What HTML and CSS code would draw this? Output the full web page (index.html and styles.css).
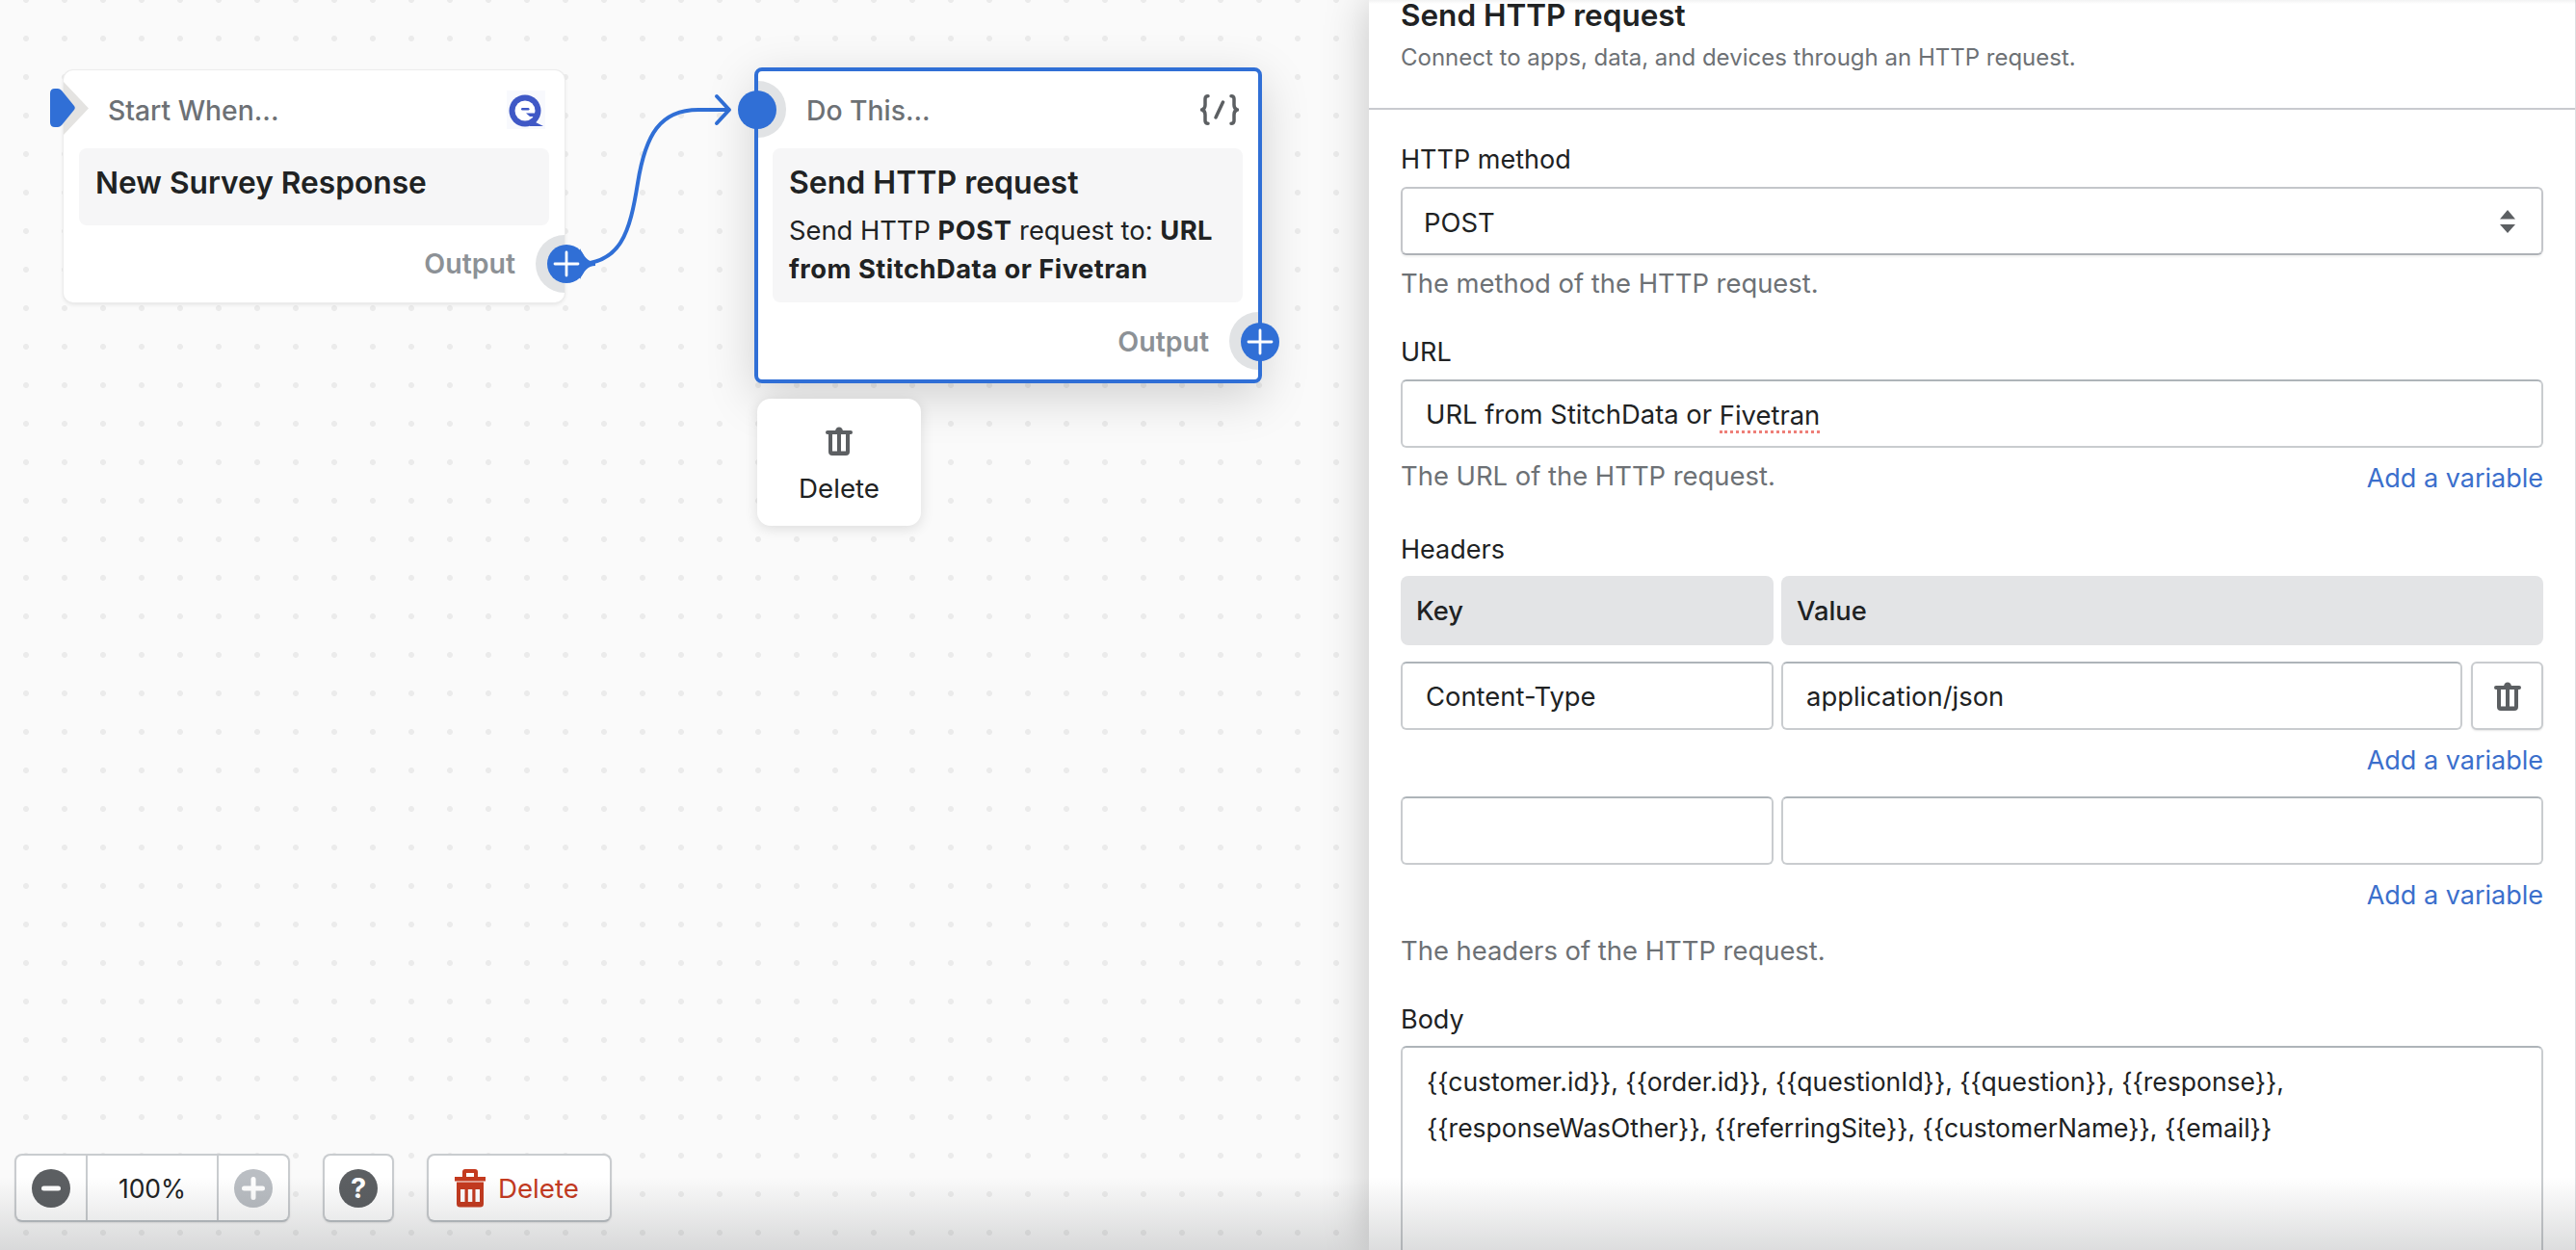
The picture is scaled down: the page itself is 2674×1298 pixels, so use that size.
FILE: index.html
```html
<!DOCTYPE html>
<html lang="en">
<head>
<meta charset="utf-8">
<title>Send HTTP request</title>
<link rel="stylesheet" href="styles.css">
</head>
<body>
<div class="app">
  <main class="canvas">
    <svg class="wires" width="1421" height="1298" viewBox="0 0 1421 1298" fill="none">
      <path d="M596 274C645 276 654 240 662 190C670 140 685 114 725 114L756 114" stroke="#306fd6" stroke-width="4"/>
      <path d="M744 100L757 114L744 128" stroke="#306fd6" stroke-width="4" stroke-linecap="round" stroke-linejoin="round"/>
      <path d="M602 258C606 266 610 272 618 272L618 276C610 276 606 282 602 290Z" fill="#306fd6"/>
    </svg>

    <section class="node node-start">
      <span class="notch"></span>
      <svg class="start-port" width="26" height="40" viewBox="0 0 26 40"><path d="M5 0H8Q10 0 12 2L25 18Q26.500 20 25 22L12 38Q10 40 8 40H5Q0 40 0 35V5Q0 0 5 0Z" fill="#306fd6"/></svg>
      <header class="node-head">
        <span class="node-kicker">Start When...</span>
        <svg class="logo" width="40" height="40" viewBox="0 0 40 40">
          <rect width="40" height="40" fill="#f8f9fd"/>
          <circle cx="19" cy="21" r="16.500" fill="#3f58c6"/>
          <path d="M24 30L38 37H24Z" fill="#3f58c6"/>
          <circle cx="19" cy="21" r="10.500" fill="#fff"/>
          <rect x="15" y="18" width="8.500" height="2.500" rx="1.200" fill="#3f58c6"/>
          <path d="M20 23.500H31V27H24Z" fill="#3f58c6"/>
        </svg>
      </header>
      <div class="node-block node-block-short">
        <h2 class="node-title">New Survey Response</h2>
      </div>
      <footer class="node-foot">Output</footer>
      <span class="halo"></span>
      <span class="plus-port">
        <svg width="40" height="40" viewBox="0 0 40 40"><circle cx="20" cy="20" r="20" fill="#306fd6"/><path d="M20 8V32M8 20H32" stroke="#fff" stroke-width="2.800" stroke-linecap="round"/></svg>
      </span>
    </section>

    <section class="node node-action">
      <span class="halo-in"></span>
      <span class="in-port"></span>
      <header class="node-head">
        <span class="node-kicker">Do This...</span>
        <svg class="code-icon" width="40" height="32" viewBox="0 0 40 32" fill="none" stroke="#5c5f62" stroke-width="3.500" stroke-linecap="round">
          <path d="M8 1.800Q5 1.800 5 4.800V11Q5 15 1.800 16Q5 17 5 21V27.200Q5 30.200 8 30.200"/>
          <path d="M32 1.800Q35 1.800 35 4.800V11Q35 15 38.200 16Q35 17 35 21V27.200Q35 30.200 32 30.200"/>
          <path d="M23.500 8L16 24"/>
        </svg>
      </header>
      <div class="node-block">
        <h2 class="node-title">Send HTTP request</h2>
        <p class="node-desc">Send HTTP <b>POST</b> request to: <b>URL from StitchData or Fivetran</b></p>
      </div>
      <footer class="node-foot">Output</footer>
      <span class="halo"></span>
      <span class="plus-port">
        <svg width="40" height="40" viewBox="0 0 40 40"><circle cx="20" cy="20" r="20" fill="#306fd6"/><path d="M20 8V32M8 20H32" stroke="#fff" stroke-width="2.800" stroke-linecap="round"/></svg>
      </span>
    </section>

    <div class="node-menu">
      <svg width="28" height="30" viewBox="0 0 28 30" fill="#5c5f62"><rect y="4" width="28" height="4" rx="2"/><path d="M10 5a4 4.500 0 0 1 8 0z"/><path d="M3 8H7V25.500H12V8H16V25.500H21V8H25V26A4 4 0 0 1 21 30H7A4 4 0 0 1 3 26Z"/></svg>
      <span>Delete</span>
    </div>

    <div class="toolbar">
      <div class="zoom-group">
        <span class="zoom-btn">
          <svg width="40" height="40" viewBox="0 0 40 40"><circle cx="20" cy="20" r="20" fill="#5c5f62"/><rect x="10" y="17.500" width="20" height="5" rx="2.500" fill="#fff"/></svg>
        </span>
        <span class="zoom-value">100%</span>
        <span class="zoom-btn">
          <svg width="40" height="40" viewBox="0 0 40 40"><circle cx="20" cy="20" r="20" fill="#babec3"/><path d="M20 10.500V29.500M10.500 20H29.500" stroke="#fff" stroke-width="5" stroke-linecap="round"/></svg>
        </span>
      </div>
      <div class="tool-btn tool-help"><span class="help-dot">?</span></div>
      <div class="tool-btn tool-delete">
        <svg width="32" height="40" viewBox="0 0 32 40" fill="#c43a1f"><path fill-rule="evenodd" d="M11 0H21A3 3 0 0 1 24 3V8H32V12.500H0V8H8V3A3 3 0 0 1 11 0ZM12 4V8H20V4Z"/><path fill-rule="evenodd" d="M2 13.500H30V36A3.500 3.500 0 0 1 26.500 39.500H5.500A3.500 3.500 0 0 1 2 36ZM6 21V34H10.500V21ZM13.800 21V34H18.300V21ZM21.500 21V34H26V21Z"/></svg>
        <span>Delete</span>
      </div>
    </div>
  </main>

  <aside class="panel">
    <header class="panel-head">
      <h1 class="panel-title">Send HTTP request</h1>
      <p class="panel-sub">Connect to apps, data, and devices through an HTTP request.</p>
    </header>
    <div class="panel-body">
      <div class="field">
        <div class="label">HTTP method</div>
        <div class="control select">
          <span class="select-value">POST</span>
          <svg width="16" height="24" viewBox="0 0 16 24" fill="#5c5f62"><path d="M8 0L16 9.500H0Z"/><path d="M0 15H16L8 24Z"/></svg>
        </div>
        <div class="help">The method of the HTTP request.</div>
      </div>

      <div class="field">
        <div class="label">URL</div>
        <div class="control">URL from StitchData or <span class="misspelt">Fivetran</span></div>
        <div class="help-row">
          <span class="help">The URL of the HTTP request.</span>
          <a class="link">Add a variable</a>
        </div>
      </div>

      <div class="field field-headers">
        <div class="label label-tight">Headers</div>
        <div class="kv-head">
          <div class="kv-cell">Key</div>
          <div class="kv-cell">Value</div>
        </div>
        <div class="kv-row">
          <div class="control">Content-Type</div>
          <div class="control">application/json</div>
          <div class="control icon-btn">
            <svg width="28" height="30" viewBox="0 0 28 30" fill="#5c5f62"><rect y="4" width="28" height="4" rx="2"/><path d="M10 5a4 4.500 0 0 1 8 0z"/><path d="M3 8H7V25.500H12V8H16V25.500H21V8H25V26A4 4 0 0 1 21 30H7A4 4 0 0 1 3 26Z"/></svg>
          </div>
        </div>
        <div class="var-row"><a class="link">Add a variable</a></div>
        <div class="kv-row kv-row-open">
          <div class="control"></div>
          <div class="control"></div>
        </div>
        <div class="var-row"><a class="link">Add a variable</a></div>
        <div class="help help-table">The headers of the HTTP request.</div>
      </div>

      <div class="field">
        <div class="label label-tight">Body</div>
        <div class="control textarea">{{customer.id}}, {{order.id}}, {{questionId}}, {{question}}, {{response}},<br>{{responseWasOther}}, {{referringSite}}, {{customerName}}, {{email}}</div>
      </div>
    </div>
  </aside>
</div>
</body>
</html>
```

FILE: styles.css
```css
* { box-sizing: border-box; }
html, body { margin: 0; height: 100%; }
body {
  font-family: Inter, "Liberation Sans", sans-serif;
  color: #202223;
  background: #fafafa;
}
.app {
  position: relative;
  display: flex;
  width: 2674px;
  height: 1298px;
  overflow: hidden;
}
.app::after {
  content: "";
  position: absolute;
  left: 0;
  right: 0;
  bottom: 0;
  height: 76px;
  background: linear-gradient(rgba(40,44,48,0), rgba(40,44,48,.16));
  pointer-events: none;
  z-index: 20;
}
.app::before {
  content: "";
  position: absolute;
  left: 1421px;
  right: 0;
  top: 0;
  height: 4px;
  background: linear-gradient(rgba(40,44,48,.06), rgba(40,44,48,0));
  z-index: 20;
}

/* canvas */
.canvas {
  position: relative;
  width: 1421px;
  flex: none;
  background-color: #fafafa;
  background-image: radial-gradient(circle at 27px 20px, #ebebeb 2.6px, rgba(235,235,235,0) 3.4px);
  background-size: 40px 40px;
  background-position: 0 20px;
}
.wires { position: absolute; left: 0; top: 0; pointer-events: none; }

.node {
  position: absolute;
  background: #fff;
  display: flex;
  flex-direction: column;
}
.node-start {
  left: 66px;
  top: 73px;
  width: 520px;
  height: 241px;
  border-radius: 10px;
  box-shadow: 0 0 0 1px #ececec, 0 2px 4px rgba(0,0,0,.1);
  z-index: 1;
}
.node-action {
  left: 783px;
  top: 70px;
  width: 527px;
  height: 328px;
  border: 4px solid #306fd6;
  border-radius: 8px;
  box-shadow: 0 14px 50px rgba(0,0,0,.17);
  z-index: 2;
}
.node-head {
  display: flex;
  align-items: center;
  justify-content: space-between;
  height: 81px;
  padding: 0 20px 0 46px;
}
.node-action .node-head { height: 80px; padding-left: 50px; }
.node-kicker { font-size: 28.300px; font-weight: 500; color: #6d7175; line-height: 40px; padding-top: 2px; }
.node-block {
  margin: 0 16px 0 15px;
  height: 160px;
  padding: 18px 17px 0;
  background: #f6f6f7;
  border-radius: 8px;
}
.node-block-short { margin: 0 16px; height: 80px; padding-top: 18px; }
.node-title { margin: 0; font-size: 32px; font-weight: 600; line-height: 36px; color: #202223; }
.node-block-short .node-title { font-size: 31.700px; }
.node-desc { margin: 12px 0 0; font-size: 27.300px; line-height: 40px; color: #202223; }
.node-desc b { font-weight: 700; letter-spacing: .5px; }
.node-foot {
  margin-top: auto;
  height: 80px;
  line-height: 80px;
  padding-right: 51px;
  text-align: right;
  font-size: 28.500px;
  font-weight: 600;
  color: #8c9196;
}
.node-action .node-foot { line-height: 82px; }

.notch {
  position: absolute;
  left: 0;
  top: 12px;
  width: 26px;
  height: 55px;
  background: #e4e3e1;
  clip-path: polygon(0 0, 100% 50%, 0 100%);
}
.start-port { position: absolute; left: -14px; top: 19px; }
.halo {
  position: absolute;
  right: 0;
  bottom: 10px;
  width: 30px;
  height: 60px;
  border-radius: 30px 0 0 30px;
  background: #e1e3e5;
}
.plus-port { position: absolute; right: -22px; bottom: 20px; width: 40px; height: 40px; z-index: 2; }
.node-action .plus-port { bottom: 19px; }
.halo-in {
  position: absolute;
  left: 0;
  top: 10px;
  width: 29px;
  height: 59px;
  border-radius: 0 30px 30px 0;
  background: #e1e3e5;
}
.in-port {
  position: absolute;
  left: -21px;
  top: 20px;
  width: 40px;
  height: 40px;
  border-radius: 50%;
  background: #306fd6;
}

.node-menu {
  position: absolute;
  left: 786px;
  top: 414px;
  width: 170px;
  height: 132px;
  display: flex;
  flex-direction: column;
  align-items: center;
  padding-top: 29px;
  gap: 16px;
  background: #fff;
  border-radius: 14px;
  box-shadow: 0 3px 14px rgba(0,0,0,.12);
  font-size: 27.700px;
  line-height: 36px;
  z-index: 2;
}

/* toolbar */
.toolbar {
  position: absolute;
  left: 15px;
  top: 1198px;
  display: flex;
  align-items: stretch;
  height: 71px;
  z-index: 3;
}
.zoom-group, .tool-btn {
  display: flex;
  align-items: center;
  background: #fff;
  border: 2px solid #c9cccf;
  border-bottom-color: #babfc3;
  border-radius: 8px;
  box-shadow: 0 1px 2px rgba(0,0,0,.1);
}
.zoom-group { width: 286px; }
.zoom-btn {
  display: flex;
  align-items: center;
  justify-content: center;
  width: 72px;
  height: 100%;
}
.zoom-value {
  flex: 1;
  align-self: stretch;
  display: flex;
  align-items: center;
  justify-content: center;
  border-left: 2px solid #c9cccf;
  border-right: 2px solid #c9cccf;
  font-size: 26.500px;
}
.tool-help { width: 74px; margin-left: 34px; justify-content: center; }
.help-dot {
  width: 40px;
  height: 40px;
  border-radius: 50%;
  background: #5c5f62;
  color: #fff;
  font-size: 29px;
  font-weight: 700;
  line-height: 40px;
  text-align: center;
}
.tool-delete {
  width: 192px;
  margin-left: 34px;
  padding-left: 27px;
  gap: 13px;
  color: #c43a1f;
  font-size: 27.700px;
}

/* panel */
.panel {
  flex: 1;
  min-width: 0;
  background: #fff;
  border-right: 1px solid #dcdde0;
  box-shadow: 0 0 44px rgba(0,0,0,.22);
  z-index: 5;
}
.panel-head {
  height: 114px;
  padding: 0 33px;
  border-bottom: 2px solid #c9cacf;
}
.panel-title { margin: 0; font-size: 31.500px; font-weight: 600; line-height: 32px; }
.panel-sub { margin: 12px 0 0; font-size: 24px; line-height: 32px; color: #6d7175; }
.panel-body { padding: 33px 33px 0; }
.field { margin-bottom: 35px; }
.field-headers { margin-top: 40px; margin-bottom: 35px; }
.label { font-size: 27px; line-height: 36px; margin-bottom: 11px; padding-top: 1px; height: 36px; }
.label-tight { margin-bottom: 10px; }
.control {
  display: flex;
  align-items: center;
  height: 71px;
  padding: 0 24px;
  background: #fff;
  border: 2px solid #c9cccf;
  border-top-color: #aeb4b9;
  border-radius: 6px;
  font-size: 27.400px;
  white-space: pre;
}
.select {
  justify-content: space-between;
  padding: 0 27px 0 22px;
  border-color: #c4c6ca;
  border-bottom-color: #aeb2b7;
  box-shadow: 0 2px 2px rgba(0,0,0,.05);
}
.select-value { padding-top: 2px; }
.misspelt { border-bottom: 3px dotted #ee7f78; line-height: 32px; margin-bottom: -6px; }
.help { font-size: 27.400px; line-height: 36px; color: #6d7175; }
.field > .help { margin-top: 11px; }
.help-row { display: flex; justify-content: space-between; align-items: center; margin-top: 11px; height: 36px; }
.link { font-size: 27px; line-height: 36px; color: #3b6fcc; padding-top: 2px; }
.help-row .link { margin-top: 3px; }
.kv-head { display: grid; grid-template-columns: 387px 1fr; gap: 8px; }
.kv-cell {
  height: 72px;
  line-height: 74px;
  padding-left: 16px;
  background: #e3e4e6;
  border-radius: 8px;
  font-size: 27.300px;
  font-weight: 500;
}
.kv-row { display: grid; grid-template-columns: 387px 1fr 76px; column-gap: 8px; margin-top: 17px; }
.kv-row .control:nth-child(3) { margin-left: 1px; }
.kv-row-open { grid-template-columns: 387px 1fr; margin-top: 21px; }
.icon-btn { justify-content: center; padding: 0; border-top-color: #c9cccf; box-shadow: 0 1px 2px rgba(0,0,0,.1); }
.var-row { display: flex; justify-content: flex-end; height: 36px; margin-top: 12px; }
.help-table { margin-top: 23px !important; }
.textarea {
  display: block;
  height: 260px;
  padding: 11px 25px 0;
  font-size: 26.500px;
  line-height: 48px;
}
```
